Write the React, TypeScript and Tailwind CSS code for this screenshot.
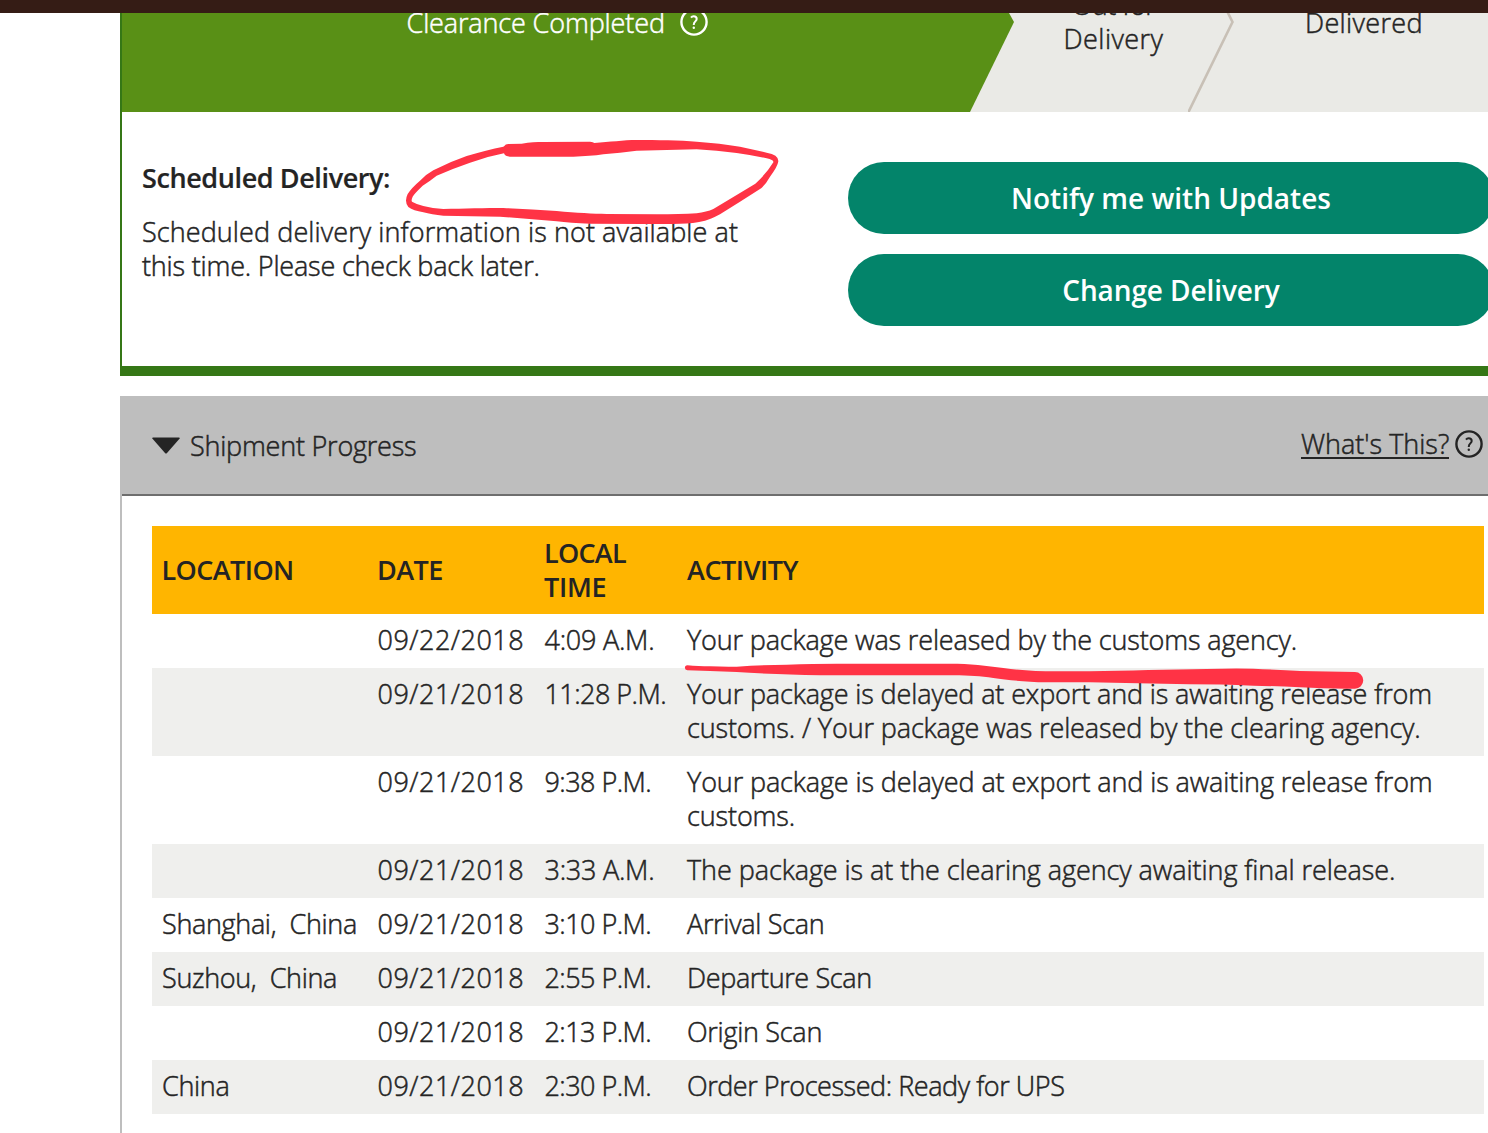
type Row = { location: string; date: string; time: string; activity: string[]; tracking: string };

const rows: Row[] = [
  {
    location: "",
    date: "09/22/2018",
    time: "4:09 A.M.",
    activity: ["Your package was released by the customs agency."],
    tracking: "tracking-[-0.15px]",
  },
  {
    location: "",
    date: "09/21/2018",
    time: "11:28 P.M.",
    activity: [
      "Your package is delayed at export and is awaiting release from",
      "customs. / Your package was released by the clearing agency.",
    ],
    tracking: "tracking-[-0.13px]",
  },
  {
    location: "",
    date: "09/21/2018",
    time: "9:38 P.M.",
    activity: ["Your package is delayed at export and is awaiting release from", "customs."],
    tracking: "tracking-[-0.12px]",
  },
  {
    location: "",
    date: "09/21/2018",
    time: "3:33 A.M.",
    activity: ["The package is at the clearing agency awaiting final release."],
    tracking: "tracking-[-0.07px]",
  },
  { location: "Shanghai,\u00a0 China", date: "09/21/2018", time: "3:10 P.M.", activity: ["Arrival Scan"], tracking: "tracking-[-0.3px]" },
  { location: "Suzhou,\u00a0 China", date: "09/21/2018", time: "2:55 P.M.", activity: ["Departure Scan"], tracking: "tracking-[-0.36px]" },
  { location: "", date: "09/21/2018", time: "2:13 P.M.", activity: ["Origin Scan"], tracking: "tracking-[-0.28px]" },
  { location: "China", date: "09/21/2018", time: "2:30 P.M.", activity: ["Order Processed: Ready for UPS"], tracking: "tracking-[-0.45px]" },
];

const columns = "grid grid-cols-[215px_167px_143px_807px]";

function HelpIcon() {
  return (
    <svg viewBox="0 0 28 28" className="block h-7 w-7 shrink-0" fill="none" stroke="currentColor">
      <circle cx="14" cy="14" r="12.6" strokeWidth="2.4" />
      <path d="M11 9.6C11.6 8.8 12.5 8.3 13.6 8.3C15.500 8.3 16.700 9.3 16.700 10.900C16.700 13.200 13.800 13.700 13.800 16.400V17" strokeWidth="2" />
      <circle cx="13.800" cy="19.800" r="1.2" fill="currentColor" stroke="none" />
    </svg>
  );
}

function Tracker() {
  return (
    <div className="flex h-[99px] overflow-hidden bg-[#eaeae6]">
      <div className="flex w-[892px] shrink-0 items-start bg-[#599016] pl-[284.500px] text-white [clip-path:polygon(0_0,887px_0,892px_9px,848px_99px,0_99px)]">
        <span className="-mt-[7.500px] tracking-[-0.13px]">Clearance Completed</span>
        <span className="-mt-[5px] ml-[15.500px]">
          <HelpIcon />
        </span>
      </div>
      <div className="-mt-[25px] w-[174px] shrink-0 pl-[25px] text-center">
        <div className="tracking-[-0.5px]">Out for</div>
        <div className="tracking-[0.45px]">Delivery</div>
      </div>
      <svg viewBox="0 0 48 99" className="h-[99px] w-12 shrink-0" fill="none" stroke="#c8c0b6" strokeWidth="2.6">
        <path d="M39.500 -1L44.500 9L0 100" />
      </svg>
      <div className="-mt-[7.500px] pl-[69px] tracking-[0.35px]">Delivered</div>
    </div>
  );
}

function CircleMark() {
  return (
    <svg viewBox="0 0 1230 510" className="pointer-events-none absolute left-[390px] top-[120px] h-[170px] w-[410px]" fill="#ff3345" fillRule="evenodd">
      <path d="M343 78Q346 72 355 72L395 71C420 67 440 66 460 66L600 65Q610 66 613 69C660 66 700 60 740 60C800 60 870 61 920 65Q990 70 1050 80L1130 98Q1166 104 1165 124Q1163 140 1140 170Q1125 197 1110 207L1050 245L990 283Q960 299 945 302Q910 311 870 311Q800 313 760 312L600 311Q540 309 500 304L330 290L160 287Q125 284 100 277Q70 272 55 261Q42 245 53 222Q65 203 90 182Q108 163 130 151Q180 125 230 108Q290 90 340 80ZM342 100Q290 110 240 128Q190 145 140 167Q120 183 98 197Q72 222 68 230Q63 240 66 245Q80 253 100 258Q130 266 160 267C220 266 290 264 340 264Q420 267 500 273C560 279 610 281 650 282L800 283Q870 283 920 280Q950 276 970 267L1030 231L1096 191Q1130 160 1150 127Q1152 120 1130 115Q1090 106 1040 99Q980 91 920 88Q830 91 740 92Q690 98 640 103Q600 109 550 110L360 110Q345 110 342 100Z" />
    </svg>
  );
}

function UnderlineMark() {
  return (
    <svg viewBox="0 0 2100 100" className="pointer-events-none absolute left-[670px] top-[660px] h-[33.333px] w-[700px]" fill="#ff3345">
      <path d="M52 16C75 18 95 19 120 19Q165 21 200 20Q280 15 350 14Q430 11 500 11H840C900 11 950 17 1000 24C1050 31 1100 34 1160 34H1260C1370 32 1500 28 1610 27Q1690 24 1750 26Q1830 30 1890 33L2055 36A25 25 0 0 1 2055 86Q1970 87 1890 82Q1810 78 1750 77Q1650 73 1560 73Q1400 70 1260 67H1130C1060 66 1010 59 970 54C930 49 900 46 850 46H500Q400 46 320 42Q250 40 200 36Q160 35 120 33L52 31A7.500 7.500 0 0 1 52 16Z" />
    </svg>
  );
}

export default function App() {
  return (
    <div className="relative h-[1133px] w-[1488px] overflow-hidden bg-white font-['Open_Sans',sans-serif] text-[27px] leading-[34px] font-light whitespace-nowrap text-[#242424] [-webkit-text-stroke:0.5px]">
      <header className="h-[13px] bg-[#351c15]" />
      <section className="ml-[120px] h-[363px] w-[1400px] border-b-[10px] border-l-2 border-[#357716]">
        <Tracker />
        <div className="flex">
          <div className="w-[726px] shrink-0 pt-[49px] pl-[20px]">
            <h2 className="font-semibold tracking-[-0.4px] [-webkit-text-stroke:0.2px]">Scheduled Delivery:</h2>
            <p className="mt-[20px] tracking-[0.09px]">Scheduled delivery information is not available at</p>
            <p className="tracking-[-0.19px]">this time. Please check back later.</p>
          </div>
          <div className="flex w-[646px] shrink-0 flex-col gap-5 pt-[50px] font-semibold text-white [-webkit-text-stroke:0px]">
            <button className="h-[72px] rounded-full bg-[#03846a] pb-px text-[28px]">Notify me with Updates</button>
            <button className="h-[72px] rounded-full bg-[#03846a] pb-px text-[28px] tracking-[-0.1px]">Change Delivery</button>
          </div>
        </div>
      </section>
      <section className="mt-5 ml-[120px] h-[800px] w-[1400px] border-l-2 border-[#bebebe]">
        <div className="flex h-[100px] items-start border-b-2 border-[#6e6e6e] bg-[#bebebe] pt-8 pl-[30px]">
          <svg viewBox="0 0 28 17" className="mt-[9px] h-[17px] w-7" fill="#242424">
            <path d="M1 .5H27Q28.500 .5 27.500 1.800L15 16Q14 17 13 16L.5 1.800Q-.5 .5 1 .5Z" />
          </svg>
          <span className="mt-px ml-[10px] w-[1111px] tracking-[-0.22px]">Shipment Progress</span>
          <span className="-mt-[2px] flex items-start">
            <a className="h-[33px] border-b-2 border-[#242424] pt-px leading-[34px]">What's This?</a>
            <span className="mt-[4px] ml-[6px]">
              <HelpIcon />
            </span>
          </span>
        </div>
        <div className="mt-[30px] ml-[30px] w-[1332px]">
          <div className={`${columns} h-[88px] items-center bg-[#ffb500] pb-px font-semibold tracking-[-0.58px] [-webkit-text-stroke:0px]`}>
            <div className="pl-[9.500px]">LOCATION</div>
            <div className="pl-[10px]">DATE</div>
            <div className="pl-[10px] tracking-[-0.75px]">
              LOCAL
              <br />
              <span className="tracking-[-0.3px]">TIME</span>
            </div>
            <div className="pl-[10px] tracking-[-0.45px]">ACTIVITY</div>
          </div>
          {rows.map((row, i) => (
            <div key={i} className={`${columns} pt-[9px] pb-[11px] ${i % 2 ? "bg-[#efefed]" : ""}`}>
              <div className="pl-[10px] tracking-[-0.33px]">{row.location}</div>
              <div className="pl-[10.500px] tracking-[0.5px]">{row.date}</div>
              <div className={`pl-[10.500px] ${row.time.endsWith("A.M.") ? "tracking-[-0.25px]" : "tracking-[-0.55px]"}`}>{row.time}</div>
              <div className={`pl-[10px] ${row.tracking}`}>
                {row.activity.map((line) => (
                  <div key={line}>{line}</div>
                ))}
              </div>
            </div>
          ))}
        </div>
      </section>
      <CircleMark />
      <UnderlineMark />
    </div>
  );
}
